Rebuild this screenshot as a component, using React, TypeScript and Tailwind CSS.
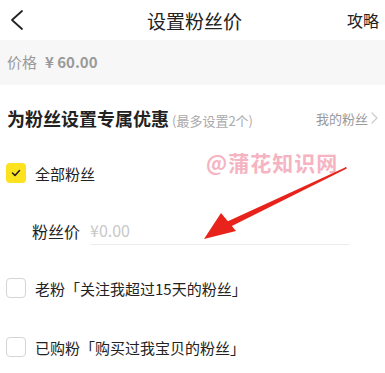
import React from 'react';

const font = { fontFamily: '"Noto Sans CJK SC", "Noto Sans", sans-serif' };

const Box: React.FC<{ checked?: boolean }> = ({ checked }) =>
  checked ? (
    <span className="flex h-[20px] w-[20px] items-center justify-center rounded-[4px] bg-[#fde21f]">
      <svg width="10" height="8" viewBox="0 0 10 8" fill="none">
        <path d="M1.5 4l2.5 2.5L8.5 1.5" stroke="#222" strokeWidth="1.6" strokeLinecap="round" strokeLinejoin="round" />
      </svg>
    </span>
  ) : (
    <span className="h-[20px] w-[20px] rounded-[4px] border border-[#d4d4d4] bg-white" />
  );

export default function App() {
  return (
    <div className="relative h-[373px] w-[385px] overflow-hidden bg-white text-[#222]" style={font}>
      {/* header */}
      <div className="flex h-[40px] items-center justify-between px-[10px]">
        <svg width="14" height="22" viewBox="0 0 14 22" fill="none">
          <path d="M12 2L2 11l10 9" stroke="#222" strokeWidth="1.8" strokeLinecap="round" strokeLinejoin="round" />
        </svg>
        <span className="ml-[18px] text-[19px] leading-none">设置粉丝价</span>
        <span className="mr-[-4px] text-[16px] leading-none">攻略</span>
      </div>

      {/* price band */}
      <div className="flex h-[45px] items-center bg-[#f7f7f7] px-[7px] text-[15px] text-[#9a9a9a]">
        <span>价格</span>
        <span className="ml-[8px] font-bold">¥ 60.00</span>
      </div>

      {/* section title */}
      <div className="mt-[24px] flex items-center justify-between px-[7px]">
        <div className="flex items-baseline">
          <span className="text-[18px] font-bold leading-none">为粉丝设置专属优惠</span>
          <span className="ml-[3px] text-[13px] leading-none text-[#aaa]">(最多设置2个)</span>
        </div>
        <div className="flex items-center text-[13px] leading-none text-[#999]">
          <span>我的粉丝</span>
          <svg className="ml-[3px]" width="7" height="12" viewBox="0 0 7 12" fill="none">
            <path d="M1 1l5 5-5 5" stroke="#ccc" strokeWidth="1.3" strokeLinecap="round" strokeLinejoin="round" />
          </svg>
        </div>
      </div>

      {/* all fans */}
      <div className="mt-[36px] flex items-center px-[6px]">
        <Box checked />
        <span className="ml-[9px] text-[15px] leading-none">全部粉丝</span>
      </div>

      {/* fan price input */}
      <div className="ml-[32px] mt-[33px] flex items-center">
        <span className="text-[16px] leading-none">粉丝价</span>
        <div className="ml-[10px] w-[260px] border-b border-[#ececec] pb-[6px] pt-[6px] text-[16px] leading-none text-[#c8c8c8]">
          ¥0.00
        </div>
      </div>

      {/* old fans */}
      <div className="mt-[33px] flex items-center px-[6px]">
        <Box />
        <span className="ml-[9px] text-[15px] leading-none">老粉「关注我超过15天的粉丝」</span>
      </div>

      {/* bought fans */}
      <div className="mt-[39px] flex items-center px-[6px]">
        <Box />
        <span className="ml-[9px] text-[15px] leading-none">已购粉「购买过我宝贝的粉丝」</span>
      </div>

      {/* watermark */}
      <div className="absolute left-[206px] top-[152px] text-[21px] font-bold leading-none tracking-[1px] text-[#f6b3c1]">
        @蒲花知识网
      </div>

      {/* red arrow */}
      <svg className="absolute left-0 top-0" width="385" height="373" viewBox="0 0 385 373">
        <path d="M346 168 L226 223 L228 227 Z" fill="#e8231c" stroke="#e8231c" strokeWidth="1.5" strokeLinejoin="round" />
        <path d="M204 239 L221 213 L236 231 Z" fill="#e8231c" />
      </svg>
    </div>
  );
}
